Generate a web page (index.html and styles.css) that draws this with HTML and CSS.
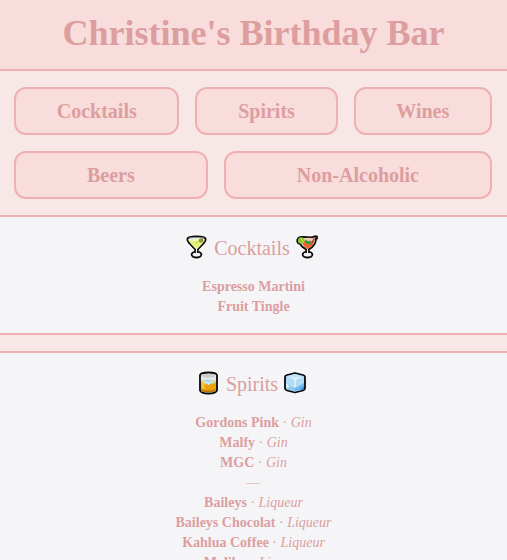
FILE: index.html
```html
<!DOCTYPE html>
<html lang="en">
<head>
<meta charset="utf-8">
<meta name="viewport" content="width=device-width, initial-scale=1">
<title>Christine's Birthday Bar</title>
<link rel="stylesheet" href="styles.css">
</head>
<body>
<header class="banner"><h1>Christine's Birthday Bar</h1></header>
<nav class="menu">
  <a href="#cocktails">Cocktails</a>
  <a href="#spirits">Spirits</a>
  <a href="#wines">Wines</a>
  <a href="#beers">Beers</a>
  <a href="#non-alcoholic">Non-Alcoholic</a>
</nav>
<main>
  <section class="drinks" id="cocktails">
    <h2>
      <svg class="icon" viewBox="0 0 24 24" aria-hidden="true">
        <ellipse cx="11.500" cy="19.600" rx="4.900" ry="2.900" fill="#f0f1f2" stroke="#080808" stroke-width="1.800"/>
        <path d="M2.300 4Q3 1.500 11.500 1.500Q20 1.500 20.700 4Q21 6 18.500 8.500L12.800 14.500V17H10.200V14.500L4.500 8.500Q2 6 2.300 4Z" fill="#f3f5ea" stroke="#080808" stroke-width="1.800" stroke-linejoin="round"/>
        <path d="M4 5H19Q18 8 12 14H11Q5 8 4 5Z" fill="#e2f477"/>
        <ellipse cx="11" cy="4.600" rx="6.500" ry="1.500" fill="#eef4c9"/>
        <path d="M10 8.500L17 4" stroke="#bbc85a"/>
        <circle cx="16" cy="5.500" r="2.200" fill="#7fa52b"/>
        <circle cx="17.300" cy="5" r="0.900" fill="#e5542c"/>
        <path d="M4 3Q11.500 1.800 19 3" fill="none" stroke="#92979b"/>
        <path d="M11.500 14V20" stroke="#e9ebec" stroke-width="1.200"/>
      </svg>
      <span>Cocktails</span>
      <svg class="icon" viewBox="0 0 24 24" aria-hidden="true">
        <ellipse cx="12.500" cy="19.600" rx="4.900" ry="2.900" fill="#f0f1f2" stroke="#080808" stroke-width="1.800"/>
        <path d="M2.300 5Q3 1.800 7 1.800L17.500 2.300L19 1.500H22V3.500H21Q21 10.500 13.800 14.500V17H11.200V14.500Q6.500 12 5.500 9.300Q1.800 8.500 2.300 5Z" fill="#edf0f1" stroke="#080808" stroke-width="1.800" stroke-linejoin="round"/>
        <path d="M6 4H19.800Q19.500 10.500 12.500 14.200Q7 11 6 4Z" fill="#ef6330"/>
        <path d="M8 3.600Q13 2 18.500 3.600L18 6H10Z" fill="#f6c6ba"/>
        <circle cx="6.300" cy="5.500" r="3.200" fill="#8fc72b"/>
        <path d="M5.500 3Q8 4.500 8 7.500" fill="none" stroke="#c1e763"/>
        <path d="M11 4.500L13 6.500L15.500 5.500L15 7.500L17 9.500L11.500 8.500L10 6.500Z" fill="#18a44e"/>
        <path d="M17 7.500L19.500 2.500H21.500" fill="none" stroke="#75382c"/>
        <path d="M12.500 14.500V20" stroke="#e9ebec" stroke-width="1.200"/>
      </svg>
    </h2>
    <ul>
      <li><b>Espresso Martini</b></li>
      <li><b>Fruit Tingle</b></li>
    </ul>
  </section>
  <section class="drinks" id="spirits">
    <h2>
      <svg class="icon" viewBox="0 0 24 24" aria-hidden="true">
        <path d="M3 4Q4 1.500 11.500 1.500Q19 1.500 20 4V19.500Q19 22.500 11.500 22.500Q4 22.500 3 19.500Z" fill="#e6e7e8" stroke="#080808" stroke-width="1.800"/>
        <ellipse cx="11.500" cy="4.700" rx="7" ry="1.900" fill="#cacbcc"/>
        <path d="M4 11H19V18Q17.500 20 11.500 20Q5.500 20 4 18Z" fill="#eba10c"/>
        <path d="M4.500 12H7.500V18L4.500 17Z" fill="#ffc43d"/>
        <path d="M4 18Q11.500 21 19 18V19Q17.500 21.500 11.500 21.500Q5.500 21.500 4 19Z" fill="#bb7607"/>
        <ellipse cx="11.500" cy="11" rx="7.500" ry="2.300" fill="#f2c754"/>
        <path d="M5.500 10.500L10.500 8.500L17.500 10L15.500 12.500L10.500 13.500Z" fill="#a5d8e8"/>
        <path d="M6.500 11L11.500 12L16.500 10M11.500 12V14" fill="none" stroke="#e1f4f7"/>
      </svg>
      <span>Spirits</span>
      <svg class="icon" viewBox="0 0 24 24" aria-hidden="true">
        <path d="M2 6Q2 4.500 4 4L12 2L20 4Q22 4.500 22 6V17Q22 19 20 19.500L12 21.500L4 19.500Q2 19 2 17Z" fill="#b1dcf5" stroke="#080808" stroke-width="1.800" stroke-linejoin="round"/>
        <path d="M3 6L12 3L21 6L12 9Z" fill="#c2e5f7"/>
        <path d="M6 15L12 17V20.500L4 18.500Z" fill="#8fc8ef"/>
        <path d="M12 20.500V17L21 12V17L19 19Z" fill="#74b8eb"/>
        <path d="M16 19.500L21 15V18Z" fill="#398edb"/>
        <path d="M8 6.500L12 8L16.500 6.500M12 8V16" fill="none" stroke="#edfaff" stroke-width="1.200"/>
        <path d="M3.500 12L6 16.500L3.500 16Z" fill="#f2fbff"/>
      </svg>
    </h2>
    <ul>
      <li><b>Gordons Pink</b> · <i>Gin</i></li>
      <li><b>Malfy</b> · <i>Gin</i></li>
      <li><b>MGC</b> · <i>Gin</i></li>
      <li>—</li>
      <li><b>Baileys</b> · <i>Liqueur</i></li>
      <li><b>Baileys Chocolat</b> · <i>Liqueur</i></li>
      <li><b>Kahlua Coffee</b> · <i>Liqueur</i></li>
      <li><b>Malibu</b> · <i>Liqueur</i></li>
    </ul>
  </section>
</main>
</body>
</html>
```
FILE: styles.css
```css
* {
  box-sizing: border-box;
}

body {
  margin: 0;
  background: #f7e7e6;
  color: #dc9e9e;
  font-family: "Liberation Serif", "Times New Roman", serif;
  font-size: 14px;
  line-height: 20px;
  text-align: center;
}

.banner {
  padding: 12px 16px 15px;
  background: #f9dcdc;
  border-bottom: 2px solid #eeb0b0;
}

h1 {
  margin: 0;
  font-size: 36px;
  line-height: 42px;
}

.menu {
  display: flex;
  flex-wrap: wrap;
  gap: 16px;
  padding: 16px 15px 16px 14px;
}

.menu a {
  flex: 1 1 auto;
  padding: 10px 32px;
  background: #f9dcdc;
  border: 2px solid #eeb0b0;
  border-radius: 12px;
  color: inherit;
  font-size: 20px;
  font-weight: bold;
  line-height: 24px;
  text-decoration: none;
}

.drinks {
  padding: 16px;
  background: #f5f5f8;
  border-top: 2px solid #eeb0b0;
  border-bottom: 2px solid #eeb0b0;
}

.drinks + .drinks {
  margin-top: 16px;
}

h2 {
  display: flex;
  align-items: center;
  justify-content: center;
  gap: 5px;
  margin: 0 0 14px;
  padding-right: 3px;
  font-size: 20px;
  font-weight: normal;
  line-height: 30px;
}

.icon {
  width: 24px;
  height: 24px;
  margin-bottom: 2px;
}

ul {
  margin: 0;
  padding: 0;
  list-style: none;
}
```
